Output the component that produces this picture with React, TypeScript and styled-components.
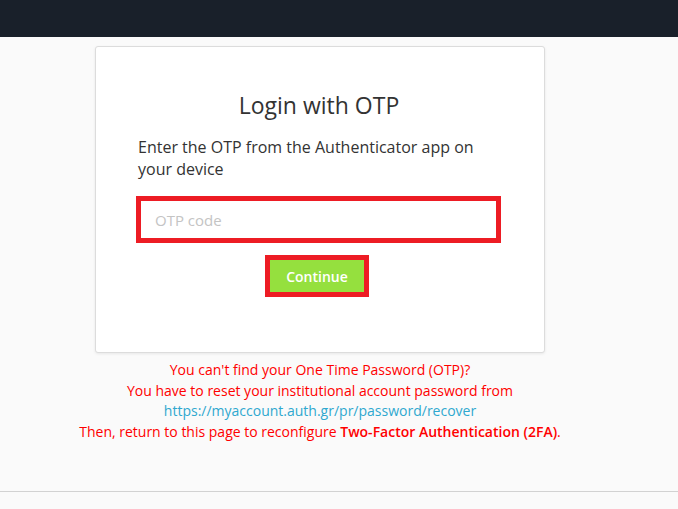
import React from "react";
import styled, { createGlobalStyle } from "styled-components";

const Global = createGlobalStyle`
  html, body { margin: 0; padding: 0; background: #fafafa; }
  body { font-family: "Open Sans", "Liberation Sans", sans-serif; color: #333; }
  * { box-sizing: border-box; }
`;

const TopBar = styled.header`
  height: 37px;
  background: #19202a;
`;

const Page = styled.div`
  min-height: 509px;
  display: flex;
  flex-direction: column;
`;

const Main = styled.main`
  width: 640px;
  display: flex;
  flex-direction: column;
  align-items: center;
  height: 454px;
`;

const Card = styled.section`
  margin-top: 9px;
  width: 450px;
  background: #fff;
  border: 1px solid #dcdcdc;
  border-radius: 3px;
  box-shadow: 0 1px 3px rgba(0, 0, 0, 0.08);
  padding: 45px 42px 55px 40px;
`;

const Title = styled.h1`
  margin: 0;
  font-size: 23px;
  line-height: 26px;
  font-weight: 400;
  text-align: center;
  color: #333;
`;

const Lead = styled.p`
  margin: 18px 0 16px 2px;
  font-size: 16px;
  line-height: 22px;
  color: #333;
`;

const Form = styled.form`
  display: flex;
  flex-direction: column;
  align-items: center;
  gap: 12px;
  width: 365px;
`;

const OtpInput = styled.input`
  width: 365px;
  height: 47px;
  border: 5px solid #ed1c24;
  background: #fff;
  padding: 0 14px;
  font-family: inherit;
  font-size: 15px;
  color: #333;
  outline: none;
  &::placeholder { color: #c4c4c4; }
`;

const ButtonFrame = styled.div`
  border: 5px solid #ed1c24;
  display: flex;
  margin-right: 3px;
`;

const ContinueButton = styled.button`
  width: 94px;
  height: 32px;
  border: none;
  background: #95e03e;
  color: #fff;
  font-family: inherit;
  font-weight: 600;
  font-size: 14px;
  cursor: pointer;
  padding: 0;
`;

const Help = styled.div`
  margin-top: 7px;
  text-align: center;
  font-size: 14px;
  line-height: 20.5px;
  color: #f00;
`;

const Strong = styled.strong`
  font-weight: 600;
`;

const HelpLink = styled.a`
  color: #2fa8cf;
  text-decoration: none;
`;

const Footer = styled.footer`
  border-top: 1px solid #d2d2d2;
  flex: 1;
  background: #fafafa;
`;

export default function App() {
  return (
    <Page>
      <Global />
      <TopBar />
      <Main>
        <Card>
          <Title>Login with OTP</Title>
          <Lead>Enter the OTP from the Authenticator app on your device</Lead>
          <Form onSubmit={(e) => e.preventDefault()}>
            <OtpInput type="text" placeholder="OTP code" />
            <ButtonFrame>
              <ContinueButton type="submit">Continue</ContinueButton>
            </ButtonFrame>
          </Form>
        </Card>
        <Help>
          You can't find your One Time Password (OTP)?
          <br />
          You have to reset your institutional account password from
          <br />
          <HelpLink href="#">https://myaccount.auth.gr/pr/password/recover</HelpLink>
          <br />
          Then, return to this page to reconfigure <Strong>Two-Factor Authentication (2FA)</Strong>.
        </Help>
      </Main>
      <Footer />
    </Page>
  );
}
